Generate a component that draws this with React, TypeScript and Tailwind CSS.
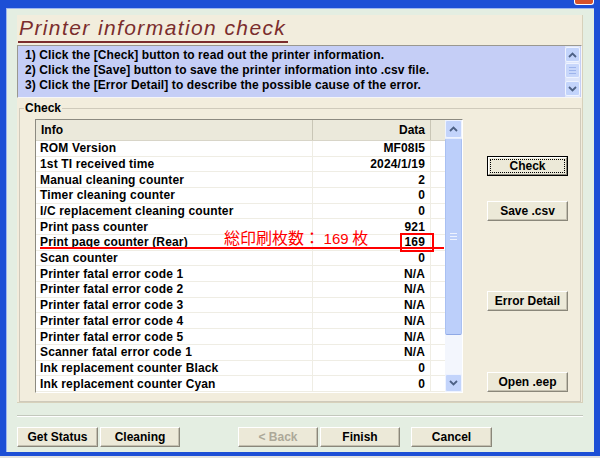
import React from 'react';

const rows: [string, string][] = [
  ['ROM Version', 'MF08I5'],
  ['1st TI received time', '2024/1/19'],
  ['Manual cleaning counter', '2'],
  ['Timer cleaning counter', '0'],
  ['I/C replacement cleaning counter', '0'],
  ['Print pass counter', '921'],
  ['Print page counter (Rear)', '169'],
  ['Scan counter', '0'],
  ['Printer fatal error code 1', 'N/A'],
  ['Printer fatal error code 2', 'N/A'],
  ['Printer fatal error code 3', 'N/A'],
  ['Printer fatal error code 4', 'N/A'],
  ['Printer fatal error code 5', 'N/A'],
  ['Scanner fatal error code 1', 'N/A'],
  ['Ink replacement counter Black', '0'],
  ['Ink replacement counter Cyan', '0'],
];

function Chevron({ up }: { up?: boolean }) {
  return (
    <svg width="9" height="6" viewBox="0 0 9 6">
      <path
        d={up ? 'M1 5 L4.5 1.5 L8 5' : 'M1 1 L4.5 4.5 L8 1'}
        fill="none"
        stroke="#4d6185"
        strokeWidth="1.8"
      />
    </svg>
  );
}

function ArrowBtn({ up, className }: { up?: boolean; className: string }) {
  return (
    <div
      className={`flex items-center justify-center rounded-[2px] border border-[#eef3ff] bg-[#c3d4fb] ${className}`}
    >
      <Chevron up={up} />
    </div>
  );
}

function Btn({ label, className, disabled }: { label: string; className: string; disabled?: boolean }) {
  return (
    <div
      className={`flex items-center justify-center border border-t-white border-l-white border-r-[#8a877a] border-b-[#8a877a] bg-[#ece9d8] shadow-[inset_-1px_-1px_0_#c4c0b0] text-[12px] font-bold ${
        disabled ? 'text-[#aca899]' : 'text-black'
      } ${className}`}
    >
      {label}
    </div>
  );
}

export default function App() {
  return (
    <div className="relative flex h-[458px] w-[600px] flex-col overflow-hidden bg-[#e2e2e2] font-['Liberation_Sans',Arial,'Noto_Sans_CJK_JP',sans-serif]">
      {/* close button of the title bar */}
      <div className="absolute right-[6px] top-0 h-[5px] w-[20px] rounded-b-[3px] border border-t-0 border-white bg-[#d8522b]" />

      <div className="bg-[#1d4fd6] px-[6px] pb-[4px] pt-[8px]">
        <div className="flex h-[444px] flex-col bg-[#e4eee2] px-[11px] pt-[7px] shadow-[inset_1px_1px_0_#9fb6ef]">
          {/* main panel */}
          <div className="flex h-[388px] flex-col border-b border-r border-[#d7d1bb] bg-[#f2eddd]">
            <div className="h-[28px] pl-[1px]">
              <span className="inline-block border-b-2 border-[#7b2d2d] pl-[1px] pr-[2px] text-[21px] italic leading-[26px] tracking-[1.4px] text-[#7b2d2d]">
                Printer information check
              </span>
            </div>

            {/* instructions */}
            <div className="mt-[2px] flex h-[53px] border border-b-[#f6f6f6] border-l-[#9a9890] border-r-[#f6f6f6] border-t-[#9a9890] bg-[#c5cef6]">
              <div className="flex-1 pl-[7px] pt-[2px] text-[12px] font-bold leading-[15px] tracking-[0.1px] text-black">
                <div>1) Click the [Check] button to read out the printer information.</div>
                <div>2) Click the [Save] button to save the printer information into .csv file.</div>
                <div>3) Click the [Error Detail] to describe the possible cause of the error.</div>
              </div>
              <div className="mr-[1px] flex w-[15px] flex-col bg-[#dde5fb] py-[1px]">
                <ArrowBtn up className="h-[15px]" />
                <div className="mt-[1px] flex h-[15px] flex-col items-center justify-center gap-[2px] rounded-[2px] border border-[#eef3ff] bg-[#c8d7fb]">
                  <div className="h-px w-[7px] bg-[#9db4ec]" />
                  <div className="h-px w-[7px] bg-[#9db4ec]" />
                  <div className="h-px w-[7px] bg-[#9db4ec]" />
                </div>
                <div className="flex-1" />
                <ArrowBtn className="h-[15px]" />
              </div>
            </div>

            {/* Check group */}
            <fieldset className="ml-[2px] mr-[1px] mt-[3px] h-[301px] border border-[#cfcabb] pl-[4px]">
              <legend className="px-[1px] text-[12px] font-bold leading-[14px] text-black">Check</legend>
              <div className="ml-[11px] mt-[4px] flex">
                {/* list */}
                <div className="relative flex h-[274px] w-[428px] border border-b-white border-l-[#8c8a80] border-r-white border-t-[#8c8a80] bg-white">
                  <div className="flex w-[409px] flex-col">
                    <div className="flex h-[21px] border-b border-[#d8d5c8] bg-[#ebe9db] text-[12px] font-bold text-black">
                      <div className="flex w-[277px] items-center border-r border-[#c9c6b6] pl-[5px]">Info</div>
                      <div className="flex w-[118px] items-center justify-end border-r border-[#c9c6b6] pr-[5px]">Data</div>
                      <div className="flex-1" />
                    </div>
                    {rows.map(([info, data]) => (
                      <div key={info} className="flex h-[15.75px] border-b border-[#efede4] text-[12px] font-bold leading-[14px] tracking-[0.15px] text-black">
                        <div className="flex w-[277px] items-center border-r border-[#efede4] pl-[4px]">{info}</div>
                        <div className="flex w-[118px] items-center justify-end border-r border-[#efede4] pr-[5px]">{data}</div>
                        <div className="flex-1" />
                      </div>
                    ))}
                  </div>
                  {/* list scrollbar */}
                  <div className="flex w-[17px] flex-col bg-[#f3f6fd]">
                    <ArrowBtn up className="h-[18px]" />
                    <div className="flex h-[197px] items-center justify-center rounded-[2px] border border-l-[#a9c0f2] border-t-[#e4ecfd] border-r-[#a9c0f2] border-b-[#8fa9e6] bg-[#bccffa]">
                      <div className="flex flex-col gap-[2px]">
                        <div className="h-px w-[7px] bg-[#eef3fe]" />
                        <div className="h-px w-[7px] bg-[#eef3fe]" />
                        <div className="h-px w-[7px] bg-[#eef3fe]" />
                      </div>
                    </div>
                    <div className="flex-1" />
                    <ArrowBtn className="h-[18px]" />
                  </div>

                  {/* red annotation */}
                  <div className="absolute left-[188px] top-[107px] whitespace-nowrap text-[16px] leading-[20px] text-[#ff0000] font-['Noto_Sans_CJK_JP',sans-serif]">
                    総印刷枚数： <span className="font-['Liberation_Sans',sans-serif] text-[15px]">169</span> 枚
                  </div>
                  <div className="absolute left-[4px] top-[127px] h-[2px] w-[404px] bg-[#ff0000]" />
                  <div className="absolute left-[364px] top-[113px] h-[19px] w-[34px] border-2 border-[#ff0000]" />
                </div>

                {/* right buttons */}
                <div className="ml-[24px] flex w-[81px] flex-col">
                  <div className="mt-[37px] h-[20px] border border-black">
                    <div className="h-full border border-b-[#8a877a] border-l-white border-r-[#8a877a] border-t-white bg-[#ece9d8] p-[1px]">
                      <div className="flex h-full items-center justify-center border border-dotted border-black text-[12px] font-bold text-black">
                        Check
                      </div>
                    </div>
                  </div>
                  <Btn label="Save .csv" className="mt-[25px] h-[20px]" />
                  <Btn label="Error Detail" className="mt-[70px] h-[20px]" />
                  <Btn label="Open .eep" className="mt-[61px] h-[20px]" />
                </div>
              </div>
            </fieldset>
          </div>

          {/* separator */}
          <div className="mt-[12px] h-[2px] border-b border-t border-b-white border-t-[#c3c8bd]" />

          {/* bottom buttons */}
          <div className="mt-[10px] flex">
            <Btn label="Get Status" className="h-[20px] w-[81px]" />
            <Btn label="Cleaning" className="ml-[2px] h-[20px] w-[80px]" />
            <Btn label="< Back" disabled className="ml-[58px] h-[20px] w-[80px]" />
            <Btn label="Finish" className="ml-[2px] h-[20px] w-[80px]" />
            <Btn label="Cancel" className="ml-[11px] h-[20px] w-[81px]" />
          </div>
        </div>
      </div>
    </div>
  );
}
